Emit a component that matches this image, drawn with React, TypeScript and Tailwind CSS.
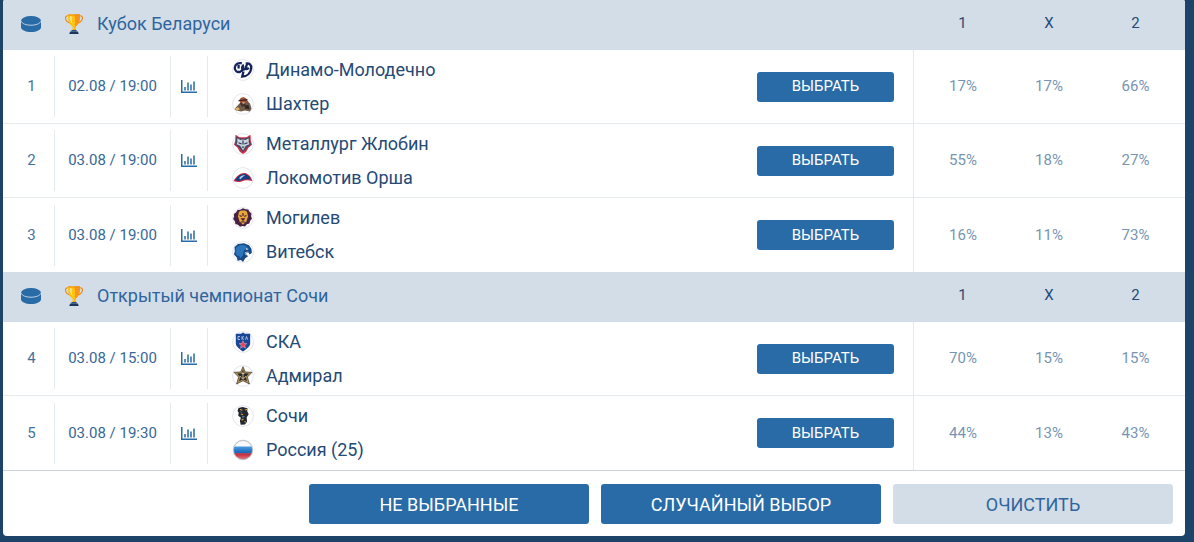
import type { ReactNode } from "react";

type Match = {
  id: number;
  date: string;
  home: string;
  away: string;
  homeLogo: ReactNode;
  awayLogo: ReactNode;
  odds: [string, string, string];
};

type League = { name: string; matches: Match[] };

function PuckIcon() {
  return (
    <svg width="20" height="16" viewBox="0 0 20 16" aria-hidden="true" className="mx-auto block">
      <path d="M0 5v6.200C0 13.800 4.400 16 10 16s10-2.200 10-4.800V5z" fill="#286ba7" />
      <ellipse cx="10" cy="4.800" rx="10" ry="4.800" fill="#286ba7" />
      <path d="M.2 5.200C.8 7.600 5 9.200 10 9.200s9.200-1.600 9.800-4" fill="none" stroke="#d3dde7" strokeWidth=".9" />
    </svg>
  );
}

function TrophyIcon() {
  return (
    <svg width="18" height="20" viewBox="0 0 18 20" aria-hidden="true" className="block shrink-0">
      <path d="M3.800 2C1.600 1.200.3 2.500.6 4.500 1 7.200 3 8.500 5.500 9.300M14.200 2c2.200-.8 3.500.5 3.200 2.500-.4 2.700-2.400 4-4.900 4.800" fill="none" stroke="#ef8a17" strokeWidth="1.200" />
      <path d="M3 .4h12c.2 5.200-.8 9.600-4.200 11.800-.7.7-.7 2.400.3 4.300H6.900c1-1.900 1-3.600.3-4.300C3.800 10 2.800 5.600 3 .4z" fill="#ffc20e" />
      <path d="M9.500.4H15c.2 5.200-.8 9.600-4.200 11.800-.7.7-.7 2.400.3 4.300H9.300c.9-4.800 1.500-10 .2-16.100z" fill="#f7941d" />
      <path d="M5 2.200c.1 3.400.8 6 2.400 7.900C6.600 7.500 6.300 4.900 6.500 2.200z" fill="#fff0a0" />
      <path d="M3 .4h12v1H3z" fill="#ef8a17" />
      <path d="M6.400 16h5.200v1.500H6.400z" fill="#294e7b" />
      <path d="M5.200 17.400h7.600l1 2.600H4.200z" fill="#19375f" />
    </svg>
  );
}

function StatsIcon() {
  return (
    <svg width="16" height="13" viewBox="0 0 16 13" aria-hidden="true" className="block">
      <path d="M.75 0v12.250H16" fill="none" stroke="#286ba7" strokeWidth="1.500" />
      <path d="M4 10.500V7M7 10.500V2.500M10 10.500V4.500M13 10.500V1.500" fill="none" stroke="#286ba7" strokeWidth="1.500" />
    </svg>
  );
}

function Badge({ children }: { children: ReactNode }) {
  return (
    <svg width="22" height="22" viewBox="0 0 22 22" aria-hidden="true" className="block shrink-0">
      <circle cx="11" cy="11" r="10.400" fill="#fff" stroke="#e3e6f0" />
      {children}
    </svg>
  );
}

const dinamo = (
  <Badge>
    <path d="M9.800 4.200C5.500 3.600 2.800 5.800 2.800 9c0 3 2.400 4.600 5.200 3.800 2.400-.8 3.300-3.800 2.800-7.300M6.600 6v3.500M10.200 7.500c-.6 3.700 2.600 4.200 3.700.8l1-3M13.500 7.500c-.3 3 1.700 3.600 3.200 1.200M13.700 4.600c3.600-.8 5.900 1.300 5.500 4.700-.5 4.400-3.600 8-9 8.200l1.300-5" fill="none" stroke="#14235b" strokeWidth="2.300" />
  </Badge>
);
const shakhter = (
  <Badge>
    <path d="M2.500 16l4-4.500 3-3 6-.5 2.500 2.500 1.500 5-1.500 3-5-1-4 1-4.500-1z" fill="#6f5c4d" />
    <path d="M7.500 7C8.500 3.800 12.500 3.500 14.500 6l1.800 3.500-8.300.3z" fill="#a54b36" />
    <path d="M6.500 7.600l9-.8M8.500 10l2 3 2-2 1.500 5" fill="none" stroke="#402a24" strokeWidth="1.400" />
    <path d="M3 15.500l3-1.200 2 2-3 1.400z" fill="#e0b45e" />
    <path d="M10 9l3 .3-1 2z" fill="#d9a883" />
    <path d="M13 12.500l3.500-.5 1 4.500-3-1z" fill="#2c2523" />
  </Badge>
);
const metallurg = (
  <Badge>
    <path d="M3.500 1.800l4 2.400h7l4-2.400.3 6 1.200 4-3.600 3-2.200 4L11 21l-3.200-2.200-2.200-4-3.600-3 1.200-4z" fill="#cf3048" />
    <path d="M4.300 3.400l3.600 2h6.200l3.600-2 .2 5 1.100 3-3.500 2.400-4.500 5.400-4.500-5.400L3 11.400l1.100-3z" fill="#344969" />
    <path d="M5.300 5.300L8.500 7l2.500-.6L13.500 7l3.200-1.700v4.200l.8 1.700-3.700 1.600L11 17.500l-2.800-4.700-3.700-1.600.8-1.700z" fill="#cdd1d8" />
    <path d="M6.500 9.700L9.600 11M15.500 9.700L12.400 11M11 7.500v4" fill="none" stroke="#26385d" strokeWidth="1.200" />
    <path d="M9.700 13.500h2.600L11 15.500z" fill="#26385d" />
  </Badge>
);
const lokomotiv = (
  <Badge>
    <path d="M1.500 14C5 8 10 4.800 14.500 6.500c3 1.200 5 4 6 7.800-4.200-1.800-7.500-1.300-10.800.2-2.800.9-5.200.7-8.200-.5z" fill="#cc3044" />
    <path d="M3 13.200C6.200 8.300 10.200 6 14 7.500c2.400.9 4 2.800 5 5.300-4-.8-7-.5-10 .8-2 .5-4 .4-6-.4z" fill="#173d82" />
    <path d="M7 11.200c2-2.500 4.200-3.500 6-2.500-2 .6-3.300 2-4.500 3.500z" fill="#b8cbe4" />
  </Badge>
);
const mogilev = (
  <Badge>
    <path d="M11 1.300l2.500.9 2.700.2 1.300 2.400 2 1.700-.4 2.700.9 2.500-1.800 2-.8 2.700-2.600.8-1.700 2.200-2.600-.5-2.500.8-2-1.900-2.600-.9-.5-2.600-1.800-2.200 1-2.500-.2-2.600 2.100-1.600L5.500 3l2.700-.2z" fill="#482044" />
    <path d="M7 4.800L9 3.600h4l2 1.200 1 4.400-1.500 5L11 17.800l-3.500-3.600L6 9.200z" fill="#e7a838" />
    <path d="M7.500 8.500l2.300 1M14.500 8.500l-2.300 1M11 6v3M9.800 11.800h2.400L11 13.300zM8.800 15h4.400" fill="#482044" stroke="#482044" strokeWidth="1.200" />
  </Badge>
);
const vitebsk = (
  <Badge>
    <path d="M2.500 6L6 3l6-.8 5 2L19.500 8l.3 4-2.300 1.500-1-2-2.500.3.6 2.500 1.700.7-3.300 2.500-2 3.500-2-2-3.500.8-.5-3L2 13.500l.8-3.500z" fill="#164985" />
    <path d="M4 6.500L8 4l5 .2 4.500 4-3.500-.4-2.500 2.700-.5 4-3 3-.7-2.500-2.800-.8-1-3z" fill="#2d75ba" />
    <path d="M14 7l2.500 1.600-2.200.1z" fill="#fff" />
    <path d="M16.500 11l-3.500.5.6 2.600" fill="none" stroke="#a4c6e4" strokeWidth=".8" />
  </Badge>
);
const ska = (
  <Badge>
    <path d="M11 1.500l2 1.200h5.200v9.500c0 3.500-4 6-7.200 8.300-3.200-2.300-7.200-4.800-7.200-8.300V2.700H9z" fill="#194795" />
    <path d="M8 5.500H6v3h2M10 5.200v3.500M12 5.200l-1.800 1.700L12 8.700M13.500 8.700l1-3.200 1.200 3.200" fill="none" stroke="#c9d5ee" strokeWidth=".8" />
    <path d="M11 9.800l1.100 2.600 2.800.2-2.100 1.900.7 2.700-2.500-1.500-2.500 1.500.7-2.700-2.100-1.900 2.800-.2z" fill="#e4445c" stroke="#f5d5dc" strokeWidth=".4" />
  </Badge>
);
const admiral = (
  <Badge>
    <path d="M11 1.700l2.300 5.300 6.700.3-4.600 4.800 2 6.900L11 15.700 4.600 19l2-6.900L2 7.300 8.700 7z" fill="#b4935a" stroke="#3c3427" strokeWidth=".7" />
    <path d="M11 4.500l1.700 3.800 4 .2-2.800 3.400 1 4.400-3.900-2-3.900 2 1-4.400-2.800-3.400 4-.2z" fill="#272a2d" />
    <path d="M11 6.500v7M8 11c1 3 5 3 6 0M9.500 8.500h3" fill="none" stroke="#e5cd91" strokeWidth=".9" />
  </Badge>
);
const sochi = (
  <Badge>
    <path d="M6.500 3l4-1 5 1.200-.3 3 1.500 3-2 3 .3 4.500-2 2.800-4.300.2-.8-4 1-3-2.700-2 .5-3.300-1.200-1.500z" fill="#22262d" />
    <path d="M8 4.500l2.500.8M13 5l2-.8M9 9l2 .8M12.500 16.500l1.300.8M9.500 15.200l2-1.200" fill="none" stroke="#d3a04e" strokeWidth="1.200" />
    <path d="M10 11l3.500.5-3 1.500zM8 6.500l2 .5-1 1z" fill="#547ba4" />
  </Badge>
);
const russia = (
  <svg width="22" height="22" viewBox="0 0 22 22" aria-hidden="true" className="block shrink-0">
    <defs>
      <clipPath id="flag-disc"><circle cx="11" cy="11" r="9.300" /></clipPath>
      <linearGradient id="flag-blue" x1="0" y1="0" x2="0" y2="1">
        <stop offset="0" stopColor="#4c9adf" />
        <stop offset="1" stopColor="#1261b4" />
      </linearGradient>
      <linearGradient id="flag-red" x1="0" y1="0" x2="0" y2="1">
        <stop offset="0" stopColor="#bc2439" />
        <stop offset="1" stopColor="#ef8782" />
      </linearGradient>
    </defs>
    <circle cx="11" cy="11" r="10.400" fill="#e5e7ec" />
    <g clipPath="url(#flag-disc)">
      <path d="M0 0h22v8H0z" fill="#f8f9fb" />
      <path d="M0 7.500h22v7H0z" fill="url(#flag-blue)" />
      <path d="M0 14.300h22V22H0z" fill="url(#flag-red)" />
    </g>
    <circle cx="11" cy="11" r="9.500" fill="none" stroke="#a8acb8" strokeWidth=".7" />
  </svg>
);

const leagues: League[] = [
  {
    name: "Кубок Беларуси",
    matches: [
      { id: 1, date: "02.08 / 19:00", home: "Динамо-Молодечно", away: "Шахтер", homeLogo: dinamo, awayLogo: shakhter, odds: ["17%", "17%", "66%"] },
      { id: 2, date: "03.08 / 19:00", home: "Металлург Жлобин", away: "Локомотив Орша", homeLogo: metallurg, awayLogo: lokomotiv, odds: ["55%", "18%", "27%"] },
      { id: 3, date: "03.08 / 19:00", home: "Могилев", away: "Витебск", homeLogo: mogilev, awayLogo: vitebsk, odds: ["16%", "11%", "73%"] },
    ],
  },
  {
    name: "Открытый чемпионат Сочи",
    matches: [
      { id: 4, date: "03.08 / 15:00", home: "СКА", away: "Адмирал", homeLogo: ska, awayLogo: admiral, odds: ["70%", "15%", "15%"] },
      { id: 5, date: "03.08 / 19:30", home: "Сочи", away: "Россия (25)", homeLogo: sochi, awayLogo: russia, odds: ["44%", "13%", "43%"] },
    ],
  },
];

function Team({ logo, name }: { logo: ReactNode; name: string }) {
  return (
    <div className="flex h-[34px] items-center gap-3 text-[18px] leading-6 text-[#254a75]">
      {logo}
      <span>{name}</span>
    </div>
  );
}

function LeagueHeader({ name }: { name: string }) {
  return (
    <tr className="h-[50px] bg-[#d3dde7] text-[15px] text-[#254a75]">
      <td className="pb-0.5 pl-1">
        <PuckIcon />
      </td>
      <th scope="rowgroup" colSpan={4} className="pb-0.5 pl-2.5 text-left font-normal">
        <div className="flex items-center gap-3.5 text-[18px] leading-6 text-[#2f659d]">
          <TrophyIcon />
          <span>{name}</span>
        </div>
      </th>
      <th scope="col" className="pb-1 pl-1.5 font-normal">1</th>
      <th scope="col" className="pb-1 font-normal">X</th>
      <th scope="col" className="pr-1.5 pb-1 font-normal">2</th>
    </tr>
  );
}

function MatchRow({ match }: { match: Match }) {
  const [first, draw, second] = match.odds;
  return (
    <tr className="h-[74px] text-[15px] text-[#7795b3] [&:not(:last-child)>td]:border-b [&>td]:border-[#e5eaef]">
      <td>
        <div className="flex h-[61px] items-center justify-center border-r border-[#e5eaef] pl-1.5 text-[#46729f]">{match.id}</div>
      </td>
      <td>
        <div className="flex h-[61px] items-center justify-center border-r border-[#e5eaef] text-[#386798]">{match.date}</div>
      </td>
      <td>
        <div className="flex h-[61px] items-center justify-center border-r border-[#e5eaef]">
          <button type="button" aria-label="Статистика" className="cursor-pointer">
            <StatsIcon />
          </button>
        </div>
      </td>
      <td className="pl-6">
        <Team logo={match.homeLogo} name={match.home} />
        <Team logo={match.awayLogo} name={match.away} />
      </td>
      <td className="pr-[19px]">
        <button type="button" className="block h-[30px] w-full cursor-pointer rounded-[3px] bg-[#286ba7] text-[15px] text-white">
          ВЫБРАТЬ
        </button>
      </td>
      <td className="border-l pl-1.5 text-center">{first}</td>
      <td className="text-center">{draw}</td>
      <td className="pr-1.5 text-center">{second}</td>
    </tr>
  );
}

export default function App() {
  return (
    <div className="min-h-screen bg-[#1e4369] pr-[9px] pb-1.5 pl-[3px] font-[Roboto,sans-serif]">
      <main className="overflow-hidden rounded-t-[2px] rounded-b-[4px] bg-white">
        <table className="w-full table-fixed border-separate border-spacing-0">
          <colgroup>
            <col className="w-[52px]" />
            <col className="w-[116px]" />
            <col className="w-[37px]" />
            <col />
            <col className="w-[156px]" />
            <col className="w-[93px]" />
            <col className="w-[86px]" />
            <col className="w-[93px]" />
          </colgroup>
          {leagues.map((league) => (
            <tbody key={league.name}>
              <LeagueHeader name={league.name} />
              {league.matches.map((match) => (
                <MatchRow key={match.id} match={match} />
              ))}
            </tbody>
          ))}
        </table>
        <div className="flex justify-end gap-3 border-t border-[#ced4df] px-3 pt-[13px] pb-3 text-[18px]">
          <button type="button" className="h-10 w-[280px] cursor-pointer rounded-[3px] bg-[#286ba7] text-white">
            НЕ ВЫБРАННЫЕ
          </button>
          <button type="button" className="h-10 w-[280px] cursor-pointer rounded-[3px] bg-[#286ba7] text-white">
            СЛУЧАЙНЫЙ ВЫБОР
          </button>
          <button type="button" className="h-10 w-[280px] cursor-pointer rounded-[3px] bg-[#d3dde7] text-[#2f659d]">
            ОЧИСТИТЬ
          </button>
        </div>
      </main>
    </div>
  );
}
